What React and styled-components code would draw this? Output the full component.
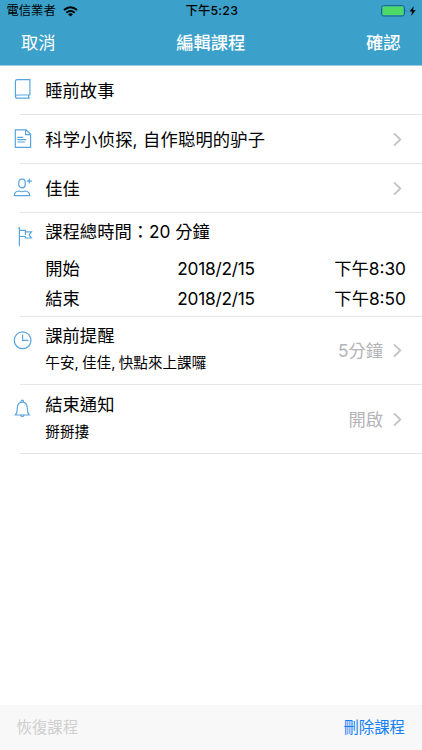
import React from 'react';
import styled, { createGlobalStyle } from 'styled-components';

const GlobalStyles = createGlobalStyle`
  * {
    box-sizing: border-box;
  }

  body {
    margin: 0;
    background: #fff;
    color: #000;
    font-family: Inter, 'Noto Sans CJK TC', 'Noto Sans CJK SC', sans-serif;
    font-size: 17.3px;
    font-weight: 400;
  }
`;

const Screen = styled.div`
  display: flex;
  flex-direction: column;
  width: 422px;
  height: 750px;
  overflow: hidden;
`;

const Header = styled.header`
  height: 66px;
  background: #3ba1ca;
  border-bottom: 1px solid #9ccbe0;
`;

const StatusBar = styled.div`
  display: grid;
  grid-template-columns: 1fr auto 1fr;
  align-items: center;
  height: 20px;
  padding: 2px 5px 0 6.5px;
  font-size: 12.3px;
  line-height: 18px;
`;

const Carrier = styled.div`
  display: flex;
  align-items: center;
  gap: 7px;
`;

const Clock = styled.div`
  font-weight: 500;
  letter-spacing: 0.25px;
`;

const Power = styled.div`
  display: flex;
  justify-content: flex-end;
  align-items: center;
`;

const NavBar = styled.nav`
  display: grid;
  grid-template-columns: 1fr auto 1fr;
  align-items: center;
  height: 45px;
  padding: 1px 21.5px 0 21px;
  color: #fff;
  line-height: 24px;
`;

const NavItem = styled.span`
  font-weight: ${(props) => (props.$bold ? 500 : 400)};
  text-align: ${(props) => props.$align || 'left'};
`;

const List = styled.main`
  flex: 1;
`;

const Row = styled.section`
  display: flex;
  height: ${(props) => props.$height}px;
  padding-left: 13px;
`;

const IconCell = styled.div`
  flex: none;
  width: 20px;
  height: 20px;
  margin-top: ${(props) => props.$top}px;

  svg {
    display: block;
  }
`;

const Content = styled.div`
  flex: 1;
  display: flex;
  align-items: center;
  padding: 0 19px 0 12.3px;
`;

const Schedule = styled.div`
  flex: 1;
  padding: 7px 16px 0 12.3px;
`;

const Texts = styled.div`
  flex: 1;
`;

// title with a smaller line of text below
const NoteTexts = styled(Texts)`
  padding-bottom: 4px;
`;

const Title = styled.div`
  line-height: 24px;
  white-space: nowrap;
  word-spacing: ${(props) => (props.$loose ? '0.2px' : 'normal')};
  letter-spacing: ${(props) => (props.$loose ? '0.18px' : 'normal')};
`;

const Note = styled.div`
  margin-top: 4px;
  font-size: 14.6px;
  line-height: 22px;
  white-space: nowrap;
  word-spacing: -0.8px;
`;

const Value = styled.span`
  margin-right: 10px;
  color: #b4b4b8;
  line-height: 24px;
`;

const TimeRow = styled.div`
  display: grid;
  grid-template-columns: 132px 1fr auto;
  height: 29.5px;
  line-height: 29.5px;
`;

const Times = styled.div`
  margin-top: 10px;
`;

const DateText = styled.span`
  letter-spacing: -0.25px;
`;

const Divider = styled.div`
  height: 1px;
  margin: -1px 0 0 20px;
  background: #e6e6e7;
`;

const Footer = styled.footer`
  display: flex;
  justify-content: space-between;
  align-items: center;
  height: 45px;
  padding: 0 17px 0 16.5px;
  background: #f8f8f8;
  font-size: 15.4px;
  line-height: 22px;
`;

const FooterButton = styled.span`
  color: ${(props) => (props.$disabled ? '#cfcfcf' : '#1580f4')};
`;

const LineIcon = ({ children }) => (
  <svg width="20" height="20" viewBox="0 0 20 20" fill="none" stroke="#58a5df" strokeWidth="1.2">
    {children}
  </svg>
);

const BookIcon = () => (
  <LineIcon>
    <path d="M16.9 16.3V.6H4.2Q2.4.6 2.4 2.4v14.8q0 2 2 2h12.5M2.4 17.4q0-1.4 2-1.4h12.5" />
    <path d="M15.6 16v3" />
  </LineIcon>
);

const DocumentIcon = () => (
  <LineIcon>
    <path d="M2.3 .9h10.8l4.5 4.4v13.1H2.3zM12.6 .9v4.8h5" />
    <path d="M4.4 8.4h5.8M4.4 10.7h8.8M4.4 13h7.4" />
  </LineIcon>
);

const PersonIcon = () => (
  <LineIcon>
    <rect x="5.8" y="1.1" width="6.4" height="8.7" rx="3" />
    <path d="M1.3 17.7q0-4.4 4.7-4.7 3 1.5 6 0 4.7.3 4.7 4.7zM16.3.6v5M13.8 3.1h5" />
  </LineIcon>
);

const FlagIcon = () => (
  <LineIcon>
    <path d="M6.4.8v18.4M5.3.8h2M6.4 3.4h6v1.5h6l-2.3 3 2.3 3.1h-6V9.5h-6M12.4 4.9v3" />
  </LineIcon>
);

const ClockIcon = () => (
  <LineIcon>
    <circle cx="9.6" cy="10.3" r="8.4" />
    <path d="M9.6 4.5v5.8h5.8" />
  </LineIcon>
);

const BellIcon = () => (
  <LineIcon>
    <path d="M2.4 16c1.6-1.7 1.9-3.3 1.9-6.6 0-3.9 1.8-6.2 5-6.2s5 2.3 5 6.2c0 3.3.3 4.9 1.9 6.6z" />
    <path d="M8.1 3.2V2.4a1.2 1.2 0 0 1 2.4 0v.8M7.4 16.2q1.9 2.8 3.8 0" />
  </LineIcon>
);

const Chevron = () => (
  <svg width="10" height="16" viewBox="0 0 10 16" fill="none" stroke="#c2c2c7" strokeWidth="1.8">
    <path d="M1 1.4L7.3 7.5 1 13.6" />
  </svg>
);

const WifiIcon = () => (
  <svg width="15" height="11" viewBox="0 0 15 11" fill="none" stroke="#000" strokeWidth="2">
    <path d="M1 4.1q6.5-5.6 13 0M3.4 6.7q4.1-3.4 8.2 0" />
    <path d="M5.1 8.2q2.4-1.9 4.8 0L7.5 10.6z" fill="#000" stroke="none" />
  </svg>
);

const BatteryIcon = () => (
  <svg width="36" height="12" viewBox="0 0 36 12">
    <rect x=".6" y=".6" width="22.8" height="10.4" rx="2" fill="none" stroke="#1b6685" />
    <rect x="1.6" y="1.6" width="20.8" height="8.4" rx=".8" fill="#4cd964" />
    <path d="M24.7 4q1.4 1.8 0 3.6z" fill="#1b6685" />
    <path d="M32.8.9L28.6 6.6h2.5l-.9 4.3 4.5-5.9H32z" fill="#000" />
  </svg>
);

const App = () => {
  return (
    <Screen>
      <GlobalStyles />
      <Header>
        <StatusBar>
          <Carrier>
            電信業者
            <WifiIcon />
          </Carrier>
          <Clock>下午5:23</Clock>
          <Power>
            <BatteryIcon />
          </Power>
        </StatusBar>
        <NavBar>
          <NavItem>取消</NavItem>
          <NavItem $bold>編輯課程</NavItem>
          <NavItem $bold $align="right">確認</NavItem>
        </NavBar>
      </Header>

      <List>
        <Row $height={49}>
          <IconCell $top={13}><BookIcon /></IconCell>
          <Content>
            <Title>睡前故事</Title>
          </Content>
        </Row>
        <Divider />
        <Row $height={49}>
          <IconCell $top={14}><DocumentIcon /></IconCell>
          <Content>
            <Texts>
              <Title lang="zh-CN" $loose>科学小侦探, 自作聪明的驴子</Title>
            </Texts>
            <Chevron />
          </Content>
        </Row>
        <Divider />
        <Row $height={49}>
          <IconCell $top={14}><PersonIcon /></IconCell>
          <Content>
            <Texts>
              <Title>佳佳</Title>
            </Texts>
            <Chevron />
          </Content>
        </Row>
        <Divider />
        <Row $height={104}>
          <IconCell $top={14}><FlagIcon /></IconCell>
          <Schedule>
            <Title>課程總時間：20 分鐘</Title>
            <Times>
              <TimeRow>
                <span>開始</span>
                <DateText>2018/2/15</DateText>
                <span>下午8:30</span>
              </TimeRow>
              <TimeRow>
                <span>結束</span>
                <DateText>2018/2/15</DateText>
                <span>下午8:50</span>
              </TimeRow>
            </Times>
          </Schedule>
        </Row>
        <Divider />
        <Row $height={68}>
          <IconCell $top={13}><ClockIcon /></IconCell>
          <Content>
            <NoteTexts>
              <Title>課前提醒</Title>
              <Note>午安, 佳佳, 快點來上課囉</Note>
            </NoteTexts>
            <Value>5分鐘</Value>
            <Chevron />
          </Content>
        </Row>
        <Divider />
        <Row $height={69}>
          <IconCell $top={14}><BellIcon /></IconCell>
          <Content>
            <NoteTexts>
              <Title>結束通知</Title>
              <Note>掰掰摟</Note>
            </NoteTexts>
            <Value>開啟</Value>
            <Chevron />
          </Content>
        </Row>
        <Divider />
      </List>

      <Footer>
        <FooterButton $disabled>恢復課程</FooterButton>
        <FooterButton>刪除課程</FooterButton>
      </Footer>
    </Screen>
  );
};

export default App;
